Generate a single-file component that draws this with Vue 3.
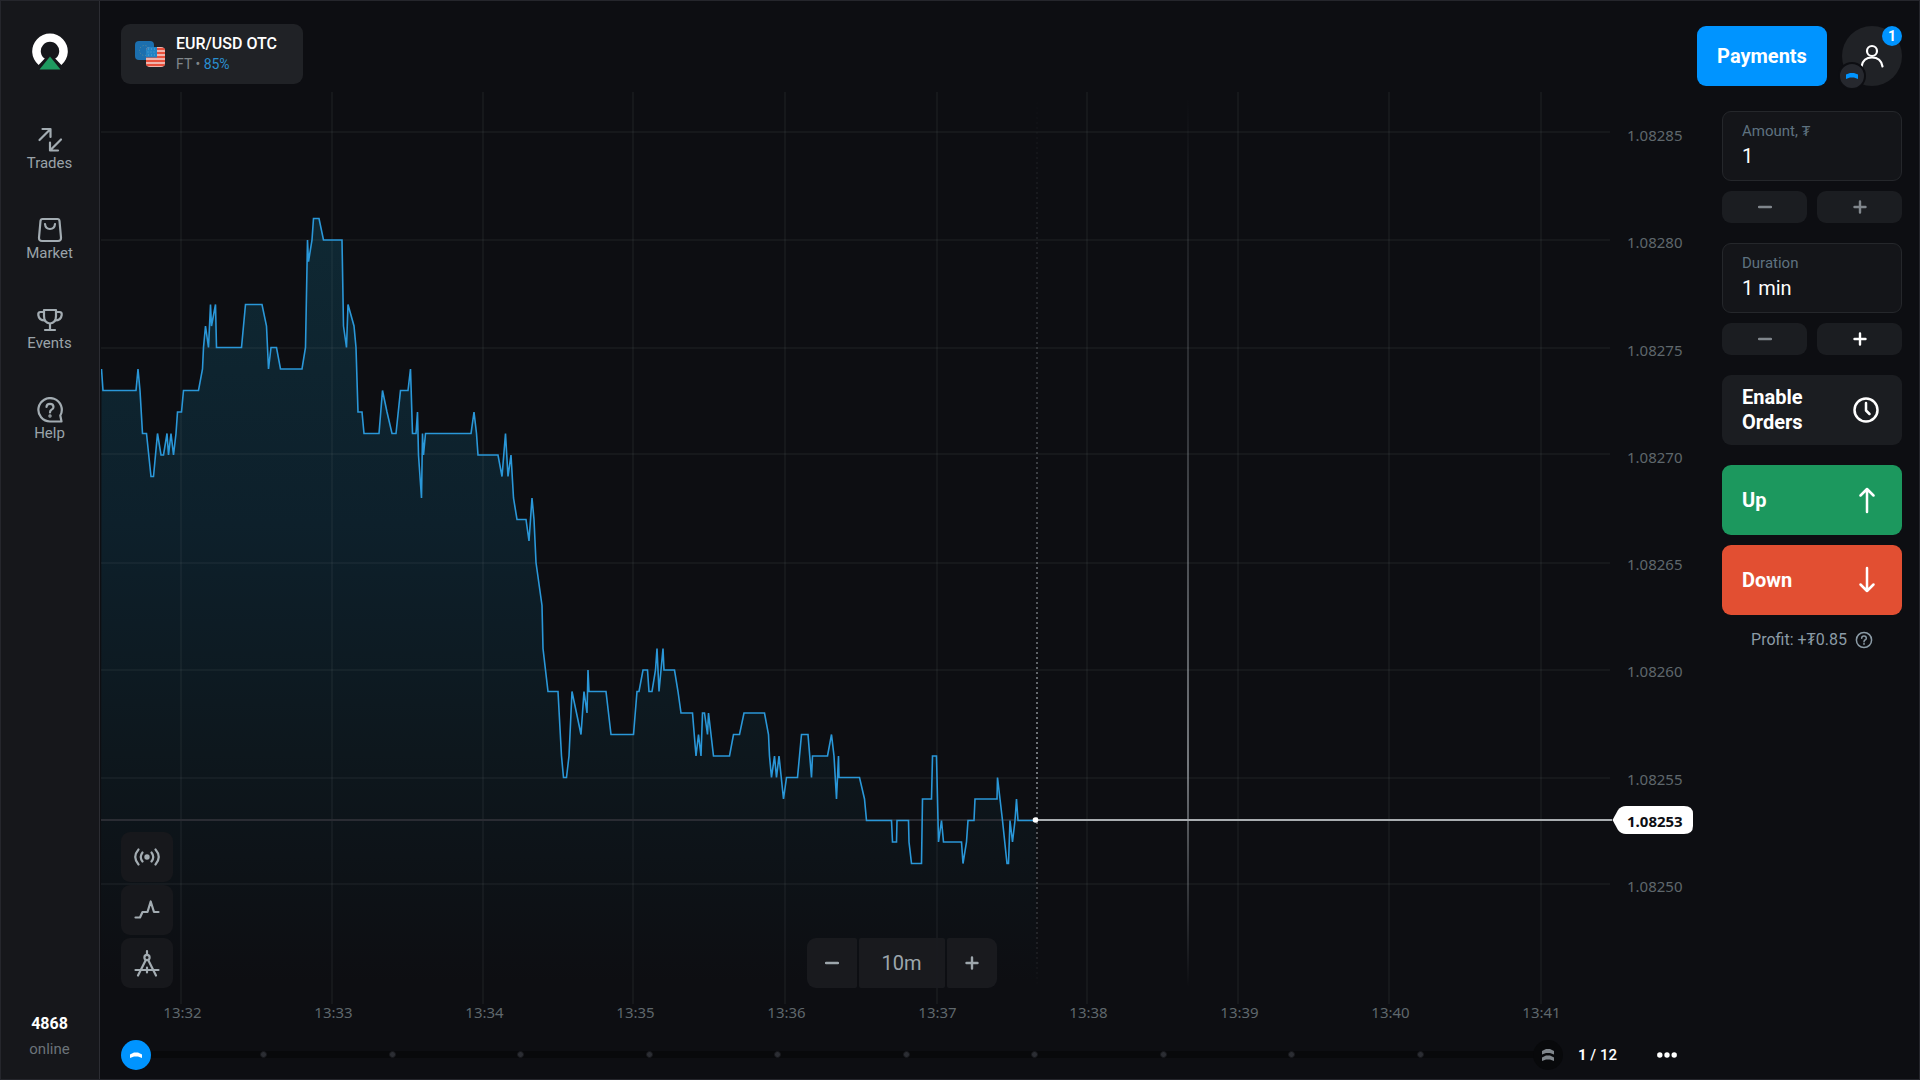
<script setup>
const navItems = [
  { id: 'trades', label: 'Trades' },
  { id: 'market', label: 'Market' },
  { id: 'events', label: 'Events' },
  { id: 'help', label: 'Help' },
]

const prices = ['1.08285', '1.08280', '1.08275', '1.08270', '1.08265', '1.08260', '1.08255', '1.08250']
const times = ['13:32', '13:33', '13:34', '13:35', '13:36', '13:37', '13:38', '13:39', '13:40', '13:41']
const gridX = [80, 231, 382, 532, 684, 836, 986, 1137, 1288, 1440]
const gridY = [40, 148, 256, 362, 471, 578, 686, 792]

// Quotes as [x, last two digits of the price]
const quotes = [
  [0.5, 74], [2, 73], [35, 73], [37, 74], [39, 73], [41.5, 71], [45.5, 71], [50, 69], [52.5, 69], [56.5, 71],
  [60, 70], [62.5, 70], [66, 71], [67.5, 70], [70, 71], [72.5, 70], [75, 71], [76.5, 72], [80.5, 72], [82.5, 73],
  [97.5, 73], [101.5, 74], [102.5, 75], [104.5, 76], [107.5, 75], [109.5, 77], [110.5, 76], [114.5, 77],
  [115.5, 75], [140.5, 75], [144.5, 77], [161, 77], [165.5, 76], [167.5, 74], [170, 75], [175.5, 75],
  [179.5, 74], [201, 74], [204.5, 75], [206.5, 80], [207.5, 79], [211, 80], [212.5, 81], [218, 81],
  [222.5, 80], [241, 80], [242.5, 76], [245.5, 75], [247, 77], [253, 76], [255, 75], [257, 72], [261, 72],
  [263, 71], [278, 71], [281.5, 73], [286, 72], [291, 71], [295, 71], [299.5, 73], [307, 73], [309.5, 74],
  [311.5, 71], [315, 71], [316.5, 72], [317.5, 70], [320.5, 68], [321.5, 71], [322.5, 70], [324.5, 71],
  [370, 71], [373, 72], [375.5, 71], [377, 70], [397, 70], [401, 69], [404.5, 71], [407, 69], [410, 70],
  [412.5, 68], [416, 67], [425, 67], [428, 66], [431, 68], [433, 67], [435, 65], [441, 63], [442, 61],
  [447, 59], [457, 59], [460.5, 56], [462.5, 55], [465.5, 55], [468, 56], [471, 59], [480, 57], [483, 59],
  [486, 58], [487, 60], [488, 59], [505, 59], [510, 57], [532.5, 57], [536, 59], [538, 59], [542, 60],
  [546.5, 60], [548, 59], [551, 59], [554.5, 60], [556, 61], [558, 59], [562, 61], [563, 60], [573.5, 60],
  [577, 59], [580, 58], [591.5, 58], [595, 56], [597.5, 57], [600, 56], [601.5, 58], [603.5, 58],
  [606.5, 57], [607.5, 58], [610, 57], [612.5, 56], [628.5, 56], [632.5, 57], [638.5, 57], [643, 58],
  [663.5, 58], [667.5, 57], [668.5, 56], [670.5, 55], [673.5, 56], [675.5, 55], [678, 56], [682.5, 54],
  [685.5, 55], [696.5, 55], [698.5, 56], [700.5, 57], [707, 57], [710.5, 55], [711.5, 56], [726.5, 56],
  [730.5, 57], [733, 56], [735.5, 54], [737.5, 56], [738, 55], [758.5, 55], [763.5, 54], [765.5, 53],
  [790.5, 53], [791.5, 52], [795.5, 52], [796, 53], [807.5, 53], [808, 52], [810.5, 51], [820.5, 51],
  [821.5, 54], [830.5, 54], [831.5, 56], [835.5, 56], [837.5, 52], [840.5, 53], [842.5, 52], [860.5, 52],
  [862, 51], [865.5, 52], [867, 53], [873, 53], [874, 54], [896, 54], [896.5, 55], [899, 54], [901.5, 53],
  [906, 51], [907.5, 51], [909, 53], [911.5, 52], [914, 53], [915.5, 54], [917, 53], [935, 53],
]

const levelY = (p) => 793 - (p - 50) * 21.5
const linePoints = quotes.map(([x, p]) => `${x},${levelY(p)}`).join(' ')
const areaPoints = `0,912 ${linePoints} 935,912`
</script>

<template>
  <div class="app">
    <aside class="sidebar">
      <a href="#" class="logo" aria-label="Home">
        <svg width="36" height="38" viewBox="0 0 36 38">
          <path d="M6.6 32 A17.8 17.8 0 1 1 29.4 32 L23.2 25.6 A9.2 9.2 0 1 0 12.8 25.6 Z" fill="#fff" />
          <path d="M18 20 L33 43 H3 Z" fill="#16171b" />
          <path d="M18 23.5 L28.5 36.5 H7.500 Z" fill="#1f9a60" />
        </svg>
      </a>
      <nav class="nav">
        <a v-for="item in navItems" :key="item.id" href="#" class="nav-item">
          <svg width="26" height="26" viewBox="0 0 26 26" class="stroke-icon">
            <template v-if="item.id === 'trades'">
              <path d="M2.500 13 L13 2.500 M5.500 2 H13.500 V10" />
              <path d="M24 12.500 L13.500 23 M13 15.500 V23.500 H21" />
            </template>
            <template v-else-if="item.id === 'market'">
              <path d="M5.500 2 H20.500 Q22.300 2 22.500 4 L24 20.500 Q24.200 24 21 24 H5 Q1.800 24 2 20.500 L3.500 4 Q3.700 2 5.500 2 Z" />
              <path d="M8 7 Q8.500 12 13 12 Q17.500 12 18 7" />
            </template>
            <template v-else-if="item.id === 'events'">
              <path d="M7 3 H19 V9 Q19 16 13 16.500 Q7 16 7 9 Z" />
              <path d="M7 5 H3.500 Q1 5 1.300 8 Q2 13.500 8 13.500 M19 5 H22.500 Q25 5 24.700 8 Q24 13.500 18 13.500" />
              <path d="M13 17 V22 M8 23 H18" />
            </template>
            <template v-else>
              <path d="M24.500 24.500 H13 A11.700 11.700 0 1 1 23.300 18.500 Z" />
              <path d="M9.500 10 Q9.500 6.800 13 6.800 Q16.500 6.800 16.500 10 Q16.500 12 14.500 12.800 Q13 13.500 13 15.500" />
              <circle cx="13" cy="19" r="0.6" />
            </template>
          </svg>
          <span>{{ item.label }}</span>
        </a>
      </nav>
      <div class="online">
        <strong>4868</strong>
        <span>online</span>
      </div>
    </aside>

    <main class="main">
      <header class="header">
        <button type="button" class="asset">
          <svg width="31" height="26" viewBox="0 0 31 26">
            <clipPath id="us-flag"><rect x="11" y="6" width="19" height="20" rx="4" /></clipPath>
            <rect x="0" y="0" width="19" height="19" rx="4" fill="#1c6fae" />
            <circle cx="9.500" cy="9.500" r="5" fill="none" stroke="#5f8f96" stroke-width="1" stroke-dasharray="1 2" />
            <g clip-path="url(#us-flag)">
              <rect x="11" y="6" width="20" height="20" fill="#f0b4ac" />
              <path d="M11 8 H31 M11 12 H31 M11 16 H31 M11 20 H31 M11 24 H31" stroke="#e8503c" stroke-width="2" />
              <rect x="11" y="6" width="11" height="10.500" fill="#2283c4" />
              <path d="M13 8 H21 M12.500 11 H21 M13 14 H21" stroke="#5aa3d2" stroke-width="1" stroke-dasharray="1 2" />
            </g>
          </svg>
          <span class="asset-text">
            <span class="asset-name">EUR/USD OTC</span>
            <span class="asset-sub">FT • <b>85%</b></span>
          </span>
        </button>
        <div class="account">
          <button type="button" class="payments">Payments</button>
          <button type="button" class="avatar" aria-label="Profile, 1 notification">
            <svg width="24" height="24" viewBox="0 0 24 24">
              <circle cx="12" cy="7" r="5" />
              <path d="M1.500 22.500 Q3 13.500 12 13.500 Q21 13.500 22.500 22.500" />
            </svg>
            <span class="avatar-count">1</span>
            <span class="avatar-rank">
              <svg width="12" height="8" viewBox="0 0 12 8"><path d="M0 2.500 L4 1 H8 L12 2.500 V7 L8 5.500 H4 L0 7 Z" fill="#0094ff" /></svg>
            </span>
          </button>
        </div>
      </header>

      <div class="content">
        <section class="chart-column">
          <div class="chart">
            <svg class="plot" viewBox="0 0 1511 912" preserveAspectRatio="none" role="img" aria-label="EUR/USD price chart">
              <defs>
                <linearGradient id="area" gradientUnits="userSpaceOnUse" x1="0" y1="126" x2="0" y2="890">
                  <stop offset="0" stop-color="#0f2833" />
                  <stop offset="0.4" stop-color="#0d202b" />
                  <stop offset="0.7" stop-color="#0d171d" />
                  <stop offset="1" stop-color="#0d0e12" />
                </linearGradient>
                <linearGradient id="fade" gradientUnits="userSpaceOnUse" x1="0" y1="5" x2="0" y2="895">
                  <stop offset="0" stop-color="#8a9096" stop-opacity="0" />
                  <stop offset="0.35" stop-color="#8a9096" stop-opacity="0.3" />
                  <stop offset="0.75" stop-color="#a0a5aa" stop-opacity="0.7" />
                  <stop offset="1" stop-color="#8a9096" stop-opacity="0" />
                </linearGradient>
              </defs>
              <polygon :points="areaPoints" fill="url(#area)" />
              <line v-for="x in gridX" :key="'x' + x" :x1="x" :x2="x" y1="0" y2="912" class="grid" />
              <line v-for="y in gridY" :key="'y' + y" x1="0" x2="1509" :y1="y" :y2="y" class="grid" />
              <rect x="0" y="727" width="935" height="2" fill="#2a2c33" />
              <polyline :points="linePoints" class="quote-line" />
              <path d="M936 5 V895" stroke="url(#fade)" stroke-width="2" stroke-dasharray="2 3" />
              <rect x="1086" y="5" width="2" height="890" fill="url(#fade)" />
              <rect x="935" y="727" width="576" height="2" fill="#a9adb1" />
              <circle cx="934.500" cy="728" r="2.800" fill="#fff" />
            </svg>
            <div class="axis">
              <span v-for="p in prices" :key="p">{{ p }}</span>
              <div class="current">
                <svg width="82" height="30" viewBox="0 0 82 30">
                  <path d="M0.500 15 L6 5 Q9 1 14 1 H72 Q81 1 81 9 V21 Q81 29 72 29 H14 Q9 29 6 25 Z" fill="#fff" />
                </svg>
                <span>1.08253</span>
              </div>
            </div>
          </div>
          <div class="times">
            <span v-for="t in times" :key="t">{{ t }}</span>
          </div>

          <div class="tools">
            <button type="button" aria-label="Signals">
              <svg width="26" height="26" viewBox="0 0 26 26" class="stroke-icon">
                <circle cx="13" cy="13" r="1.600" fill="#a3acb2" />
                <path d="M8.500 8.500 Q5 13 8.500 17.500 M17.500 8.500 Q21 13 17.500 17.500 M4.500 5.500 Q-2 13 4.500 20.500 M21.500 5.500 Q28 13 21.500 20.500" />
              </svg>
            </button>
            <button type="button" aria-label="Chart type">
              <svg width="26" height="26" viewBox="0 0 26 26" class="stroke-icon">
                <path d="M1.500 20.500 H6 L8.500 15 H13.500 L16.700 4.500 L20 15 H24.500" />
              </svg>
            </button>
            <button type="button" aria-label="Drawing tools">
              <svg width="26" height="28" viewBox="0 0 26 28" class="stroke-icon">
                <circle cx="13" cy="8.500" r="2.600" />
                <path d="M13 2 V6 M11.800 11 L4 26.500 M14.200 11 L22 26.500 M1.500 21 H24.500 M13 18.500 V23.500" />
              </svg>
            </button>
          </div>

          <div class="zoom">
            <button type="button" class="zoom-out" aria-label="Zoom out">
              <svg width="14" height="14" viewBox="0 0 14 14"><path d="M1 7 H13" /></svg>
            </button>
            <button type="button" class="zoom-range">10m</button>
            <button type="button" class="zoom-in" aria-label="Zoom in">
              <svg width="14" height="14" viewBox="0 0 14 14"><path d="M1.500 7 H12.500 M7 1.500 V12.500" /></svg>
            </button>
          </div>

          <footer class="progress">
            <span class="level level-now">
              <svg width="14" height="8" viewBox="0 0 14 8"><path d="M1 3.500 L5 1.500 H9 L13 3.500 V7 L9 5.500 H5 L1 7 Z" fill="#fff" /></svg>
            </span>
            <div class="track" role="progressbar" aria-label="Level" aria-valuemin="0" aria-valuemax="12" aria-valuenow="1">
              <i v-for="n in 10" :key="n"></i>
            </div>
            <span class="level level-next">
              <svg width="12" height="14" viewBox="0 0 12 14">
                <path d="M0 3 L4 1 H8 L12 3 V6.500 L8 5 H4 L0 6.500 Z M0 9.500 L4 7.500 H8 L12 9.500 V13 L8 11.500 H4 L0 13 Z" fill="#80868c" />
              </svg>
            </span>
            <span class="count"><b>1</b> / 12</span>
            <button type="button" class="more" aria-label="More">
              <svg width="20" height="6" viewBox="0 0 20 6">
                <g fill="#fff"><circle cx="2.800" cy="3" r="2.700" /><circle cx="10" cy="3" r="2.700" /><circle cx="17.200" cy="3" r="2.700" /></g>
              </svg>
            </button>
          </footer>
        </section>

        <section class="panel">
          <div class="field">
            <label for="amount">Amount, ₮</label>
            <input id="amount" type="text" value="1" />
          </div>
          <div class="steps">
            <button type="button" aria-label="Decrease amount"><svg width="14" height="14" viewBox="0 0 14 14"><path d="M1 7 H13" /></svg></button>
            <button type="button" aria-label="Increase amount"><svg width="14" height="14" viewBox="0 0 14 14"><path d="M1.500 7 H12.500 M7 1.500 V12.500" /></svg></button>
          </div>
          <div class="field">
            <label for="duration">Duration</label>
            <input id="duration" type="text" value="1 min" />
          </div>
          <div class="steps">
            <button type="button" aria-label="Decrease duration"><svg width="14" height="14" viewBox="0 0 14 14"><path d="M1 7 H13" /></svg></button>
            <button type="button" class="active" aria-label="Increase duration"><svg width="14" height="14" viewBox="0 0 14 14"><path d="M1.500 7 H12.500 M7 1.500 V12.500" /></svg></button>
          </div>
          <button type="button" class="action orders">
            <span>Enable Orders</span>
            <svg width="28" height="28" viewBox="0 0 28 28"><circle cx="14" cy="14" r="11.500" /><path d="M14 7 V14.500 L17.500 18" /></svg>
          </button>
          <button type="button" class="action up">
            <span>Up</span>
            <svg width="28" height="28" viewBox="0 0 28 28"><path d="M15 26 V3 M8.500 9.500 L15 3 L21.500 9.500" /></svg>
          </button>
          <button type="button" class="action down">
            <span>Down</span>
            <svg width="28" height="28" viewBox="0 0 28 28"><path d="M15 2 V25 M8.500 18.500 L15 25 L21.500 18.500" /></svg>
          </button>
          <p class="profit">
            Profit: +₮0.85
            <svg width="18" height="18" viewBox="0 0 18 18">
              <circle cx="9" cy="9" r="7.600" />
              <path d="M6.700 7.200 Q6.700 5 9 5 Q11.300 5 11.300 7.200 Q11.300 8.500 10 9 Q9 9.500 9 10.700 M9 12.600 V13.200" />
            </svg>
          </p>
        </section>
      </div>
    </main>
  </div>
</template>

<style>
body {
  margin: 0;
  background: #0d0e12;
}
</style>

<style scoped>
.app {
  box-sizing: border-box;
  display: flex;
  min-height: 100vh;
  border: 1px solid #25262c;
  background: #0d0e12;
  color: #fff;
  font-family: Roboto, "Noto Sans", sans-serif;
}
.app * {
  box-sizing: border-box;
}
button {
  margin: 0;
  padding: 0;
  border: 0;
  color: inherit;
  font: inherit;
  cursor: pointer;
}
a {
  color: inherit;
  text-decoration: none;
}
svg {
  display: block;
}
.stroke-icon {
  fill: none;
  stroke: #a3acb2;
  stroke-width: 2.2;
  stroke-linecap: round;
  stroke-linejoin: round;
}

.sidebar {
  display: flex;
  flex: none;
  flex-direction: column;
  align-items: center;
  width: 99px;
  padding: 32px 1px 20px 0;
  border-right: 1px solid #2c2d33;
  background: #16171b;
}
.nav {
  display: flex;
  flex-direction: column;
  gap: 44px;
  margin-top: 56px;
}
.nav-item {
  display: flex;
  flex-direction: column;
  align-items: center;
  gap: 1px;
  height: 46px;
  color: #9aa3a9;
  font-size: 15px;
  line-height: 18px;
}
.online {
  display: flex;
  flex-direction: column;
  align-items: center;
  gap: 5px;
  margin-top: auto;
  color: #6b7379;
  font-size: 15px;
  line-height: 20px;
}
.online strong {
  color: #fff;
  font-size: 16px;
}

.main {
  display: flex;
  flex: 1;
  flex-direction: column;
  min-width: 0;
  padding: 0 17px 0 1px;
}
.header {
  display: flex;
  justify-content: space-between;
  height: 91px;
  padding-left: 20px;
}
.asset {
  display: flex;
  align-items: center;
  gap: 10px;
  width: 182px;
  height: 60px;
  margin-top: 23px;
  padding: 0 14px;
  border-radius: 9px;
  background: #202226;
  text-align: left;
}
.asset-text {
  display: flex;
  flex-direction: column;
}
.asset-name {
  font-size: 16px;
  font-weight: 500;
  line-height: 20px;
  white-space: nowrap;
}
.asset-sub {
  color: #80878b;
  font-size: 14px;
  line-height: 20px;
}
.asset-sub b {
  color: #2a8fd0;
  font-weight: 400;
}
.account {
  display: flex;
  gap: 15px;
  margin-top: 25px;
}
.payments {
  width: 130px;
  height: 60px;
  border-radius: 9px;
  background: #0094ff;
  font-size: 20px;
  font-weight: 700;
}
.avatar {
  position: relative;
  display: flex;
  align-items: center;
  justify-content: center;
  width: 60px;
  height: 60px;
  border-radius: 50%;
  background: #202226;
}
.avatar > svg {
  fill: none;
  stroke: #fff;
  stroke-width: 2.2;
  stroke-linecap: round;
}
.avatar-count {
  position: absolute;
  top: 0;
  right: 0;
  width: 20px;
  height: 20px;
  border-radius: 50%;
  background: #0094ff;
  font-size: 14px;
  font-weight: 700;
  line-height: 20px;
}
.avatar-rank {
  position: absolute;
  bottom: -4px;
  left: -4px;
  display: flex;
  align-items: center;
  justify-content: center;
  width: 28px;
  height: 28px;
  border: 2px solid #0d0e12;
  border-radius: 50%;
  background: #26282e;
}

.content {
  display: flex;
  flex: 1;
  gap: 18px;
}
.chart-column {
  position: relative;
  display: flex;
  flex: 1;
  flex-direction: column;
  min-width: 0;
}
.chart {
  display: flex;
  flex: 1;
  min-height: 480px;
}
.plot {
  flex: 1;
  min-width: 0;
  height: auto;
}
.grid {
  stroke: #8c96a0;
  stroke-opacity: 0.07;
  stroke-width: 2;
}
.quote-line {
  fill: none;
  stroke: #2a97d8;
  stroke-width: 1.6;
  vector-effect: non-scaling-stroke;
}
.axis {
  position: relative;
  display: flex;
  flex: none;
  flex-direction: column;
  justify-content: space-between;
  width: 92px;
  padding: 33px 0 108px 15px;
  color: #5f676c;
  font: 15px/20px "Noto Sans", sans-serif;
}
.current {
  position: absolute;
  top: 79.8%;
  left: 0;
  height: 30px;
  margin-top: -15px;
  color: #0d0e12;
  font-weight: 700;
}
.current span {
  position: absolute;
  top: 6px;
  left: 15px;
}
.times {
  display: grid;
  grid-template-columns: repeat(10, 1fr);
  padding: 0 87px 0 6px;
  color: #5f676c;
  font: 15px/16px "Noto Sans", sans-serif;
  text-align: center;
}
.tools {
  position: absolute;
  bottom: 91px;
  left: 20px;
  display: flex;
  flex-direction: column;
  gap: 3px;
}
.tools button {
  display: flex;
  align-items: center;
  justify-content: center;
  width: 52px;
  height: 50px;
  border-radius: 9px;
  background: #17181c;
}
.zoom {
  position: absolute;
  right: 0;
  bottom: 91px;
  left: 0;
  display: flex;
  gap: 2px;
  justify-content: center;
  padding-right: 2px;
  pointer-events: none;
}
.zoom button {
  display: flex;
  align-items: center;
  justify-content: center;
  width: 50px;
  height: 50px;
  border-radius: 2px;
  background: rgba(26, 27, 31, 0.92);
  color: #9da6ac;
  font-size: 20px;
  pointer-events: auto;
}
.zoom .zoom-out {
  border-radius: 9px 2px 2px 9px;
}
.zoom .zoom-range {
  width: 86px;
}
.zoom .zoom-in {
  border-radius: 2px 9px 9px 2px;
}
.zoom path,
.steps path {
  fill: none;
  stroke: currentColor;
  stroke-width: 2.4;
  stroke-linecap: round;
}
.progress {
  display: flex;
  align-items: center;
  height: 59px;
  padding: 10px 27px 0 20px;
}
.level {
  z-index: 1;
  display: flex;
  flex: none;
  align-items: center;
  justify-content: center;
  width: 30px;
  height: 30px;
  border-radius: 50%;
}
.level-now {
  background: #0094ff;
}
.level-next {
  background: #08090b;
}
.track {
  display: flex;
  flex: 1;
  align-items: center;
  justify-content: space-evenly;
  height: 7px;
  margin: 0 -15px;
  padding: 0 3px;
  background: #08090b;
}
.track i {
  width: 7px;
  height: 7px;
  border: 1px solid #17181c;
  border-radius: 50%;
  background: #2b2d33;
}
.count {
  width: 40px;
  margin: 0 39px 0 15px;
  font-size: 15px;
  font-weight: 500;
  white-space: nowrap;
}
.more {
  background: none;
}

.panel {
  display: flex;
  flex: none;
  flex-direction: column;
  width: 180px;
  padding-top: 19px;
}
.field {
  display: flex;
  flex-direction: column;
  height: 70px;
  padding: 9px 19px;
  border: 1px solid #25272b;
  border-radius: 9px;
  background: #141519;
}
.field label {
  color: #5f7280;
  font-size: 15px;
  line-height: 20px;
}
.field input {
  width: 100%;
  height: 30px;
  padding: 0;
  border: 0;
  outline: 0;
  background: none;
  color: #fff;
  font: 20px/30px Roboto, sans-serif;
}
.steps {
  display: flex;
  gap: 10px;
  margin: 10px 0 20px;
}
.steps button {
  display: flex;
  flex: 1;
  align-items: center;
  justify-content: center;
  height: 32px;
  border-radius: 9px;
  background: #1b1d21;
  color: #80868c;
}
.steps .active {
  color: #fff;
}
.action {
  display: flex;
  align-items: center;
  justify-content: space-between;
  height: 70px;
  padding: 0 22px 0 20px;
  border-radius: 9px;
  font-size: 20px;
  font-weight: 700;
  line-height: 25px;
  text-align: left;
}
.action svg {
  flex: none;
  fill: none;
  stroke: #fff;
  stroke-width: 2.5;
  stroke-linecap: round;
  stroke-linejoin: round;
}
.orders {
  background: #1b1d21;
}
.up {
  margin-top: 20px;
  background: #1c985e;
}
.down {
  margin-top: 10px;
  background: #e24f32;
}
.profit {
  display: flex;
  align-items: center;
  justify-content: center;
  gap: 8px;
  margin: 15px 0 0;
  color: #8b9ba6;
  font-size: 16px;
  line-height: 20px;
}
.profit svg {
  fill: none;
  stroke: #8b9ba6;
  stroke-width: 1.5;
  stroke-linecap: round;
}
</style>
